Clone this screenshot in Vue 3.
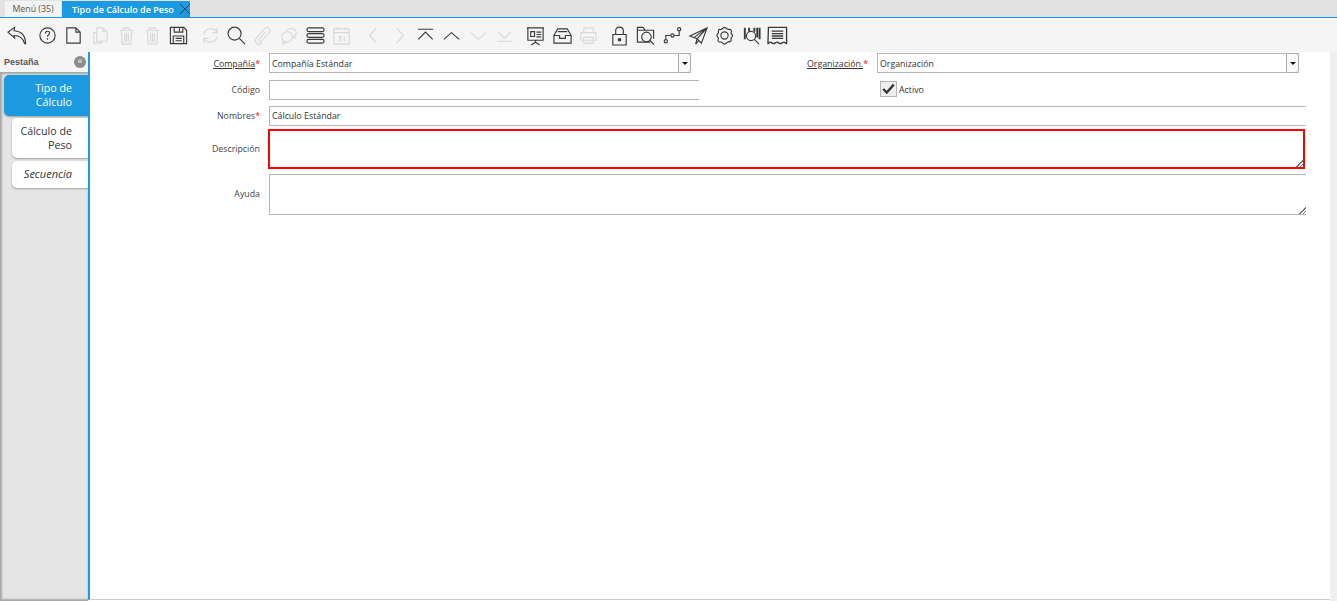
<script setup>
// toolbar groups, disabled icons are drawn in light gray
const toolbar = [
  [{ id: 'undo' }],
  [
    { id: 'help' }, { id: 'new' }, { id: 'copy', off: true }, { id: 'trash', off: true },
    { id: 'trash', off: true }, { id: 'save' }
  ],
  [
    { id: 'refresh', off: true }, { id: 'search' }, { id: 'clip', off: true }, { id: 'chat', off: true },
    { id: 'list' }, { id: 'cal', off: true }
  ],
  [
    { id: 'prev', off: true }, { id: 'next', off: true }, { id: 'first' }, { id: 'up' },
    { id: 'down', off: true }, { id: 'last', off: true }
  ],
  [{ id: 'report' }, { id: 'archive' }, { id: 'print', off: true }],
  [
    { id: 'lock' }, { id: 'zoom' }, { id: 'flow' }, { id: 'send' }, { id: 'gear' },
    { id: 'barcode' }, { id: 'ticket' }
  ]
]

const icons = {
  undo: '<path d="M2 7.5L9 2.5 8.5 6C15 6.5 20.5 10 20.5 19.5L19.5 19.5C18 14 14 11 8.5 11L9 13.5Z" />',
  help: '<circle cx="11" cy="11" r="8" /><path d="M8.8 8.8c0-3 4.4-3 4.4-.4 0 1.8-2.2 1.8-2.2 3.8M11 14v1.4" />',
  new: '<path d="M4 3h9.5l4.5 4.5V19H4zM13.5 3v4.5H18" />',
  copy: '<path d="M7 8H4v11h8v-2M7 3h6.5L18 7v10H7zM13.5 3v4H18" />',
  trash: '<path d="M4 5.5h14M8 5.5V3h6v2.5M5.5 5.5L6.5 20h9l1-14.5M9 8v10M11 8v10M13 8v10" />',
  save: '<path d="M2.5 2.5h14l3 3v14h-17zM6.5 2.5v5h9v-5M12 3.5v3M5.5 19.5v-8h11v8M8 14h6.5M8 16.5h6.5" />',
  refresh: '<path d="M4 10c1-6.5 10-8 13.5-3M18 3v5h-5M18 12c-1 6.5-10 8-13.5 3M4 19v-5h5" />',
  search: '<circle cx="9" cy="9" r="6.8" /><path d="M14 14l6 6" />',
  clip: '<path d="M14 7.5L7.5 15c-1.500 1.700 1 3.500 2.500 2L18 8c3-3.500-2-7.500-5-4L4.500 14c-3 4 2.500 8.500 6 5" />',
  chat: '<circle cx="8.5" cy="12.5" r="5.5" /><path d="M8 6c2-3.500 10-3 10 2 0 2-1 3-2.500 3.500l1.500 2-3-1M5 17l-1 3 4-2" />',
  list: '<rect x="2" y="3" width="18" height="4" rx="2" /><rect x="2" y="9" width="18" height="4" rx="2" /><rect x="2" y="15" width="18" height="4" rx="2" />',
  cal: '<path d="M3 4h16v16H3zM3 8h16M7 2v3M15 2v3M8 12h2.500l-1.500 2c2 0 2 3-.5 3M14 12v5" />',
  prev: '<path d="M14 3l-7 8 7 8" />',
  next: '<path d="M8 3l7 8-7 8" />',
  first: '<path d="M3 4.500h16M3.500 15l7.500-7.500 7.500 7.500" />',
  up: '<path d="M3 15l8-7 8 7" />',
  down: '<path d="M3 8l8 7 8-7" />',
  last: '<path d="M4 7l7 7 7-7M3 17h16" />',
  report: '<path d="M2 3h18M3 3v13h16V3M11 16v2M6.500 21l4.500-3 4.500 3M6 7h4v5H6zM12 7.500h5M12 10h5M12 12.500h5" />',
  archive: '<path d="M6 4h10l4 7v8H2v-8zM2 11h6v3h6v-3h6M6 7h10" />',
  print: '<path d="M6 8V3h10v5M3 8h16v8H3zM6 13h10v6H6zM8 16h6" />',
  lock: '<path d="M4 10h14v11H4zM7 10V6c0-5 8-5 8 0v4" /><circle cx="11" cy="15.500" r="1.300" fill="currentColor" />',
  zoom: '<path d="M16 18H2.500V2.500h6l2 3h9v9M2.500 5.500h8" /><circle cx="12" cy="12.500" r="5" /><path d="M15.500 16l4.500 4.500" />',
  flow: '<circle cx="4" cy="17" r="1.700" /><circle cx="11" cy="11" r="1.700" /><circle cx="18" cy="4.500" r="1.700" /><path d="M4 15v-4h5M13 11h5V6.500" />',
  send: '<path d="M2 11.500L20 3 14 19 9.500 14.500zM20 3L9.500 14.500 8 20l3-3.500M20 3L6.500 13" />',
  gear: '<circle cx="11" cy="11" r="3.800" /><path d="M11 2.500c2 0 2 1.500 3.500 2s2.500-.5 3.500 1-.5 2.500 0 3.500 1.500 1 1.500 2-1 1.500-1.500 2.500.5 2.500-.5 3.500-2.500.5-3.500 1-1 2-3 2-2-1.500-3-2-2.500.5-3.500-1 .5-2.500 0-3.500-1.500-1.500-1.500-2.500 1-1.500 1.500-2.500-.5-2.500.5-3.500 2.500.5 3.500-1 1.500-1.500 3-1.500z" />',
  barcode: '<path d="M4 3v12M8.500 3v4M14 3v4M17 3v10M19.500 3v12" stroke-width="2" /><circle cx="10.500" cy="11.500" r="4.800" /><path d="M14 15l5 5" />',
  ticket: '<path d="M1.500 2.500h19v17c-1 0-1.500-1.500-3-1.500s-2 1.500-3.500 1.500-2-1.500-3.500-1.500-2 1.500-3.500 1.500-2-1.500-3.500-1.500-1 1.500-2.500 1.500zM5 6.500h12M5 9h12M5 11.500h12M5 14h12" stroke-width="1.400" />'
}
</script>

<template>
  <div class="page">
    <div class="tabs">
      <div class="tab">Menú (35)</div>
      <div class="tab active">
        Tipo de Cálculo de Peso
        <svg class="close" viewBox="0 0 12 12"><path d="M1 1l10 10M11 1L1 11" /></svg>
      </div>
    </div>

    <div class="toolbar">
      <div v-for="(group, g) in toolbar" :key="g" class="tool-group">
        <div v-for="(tool, i) in group" :key="i" class="tool" :class="{ off: tool.off }">
          <svg viewBox="0 0 22 22" v-html="icons[tool.id]"></svg>
        </div>
      </div>
    </div>

    <div class="body">
      <aside class="side">
        <div class="side-head">
          <span>Pestaña</span>
          <span class="collapse">«</span>
        </div>
        <div class="side-list">
          <div class="side-tab current">Tipo de Cálculo</div>
          <div class="side-tab">Cálculo de Peso</div>
          <div class="side-tab italic">Secuencia</div>
        </div>
      </aside>

      <main class="form">
        <div class="row first">
          <label class="lbl"><u>Compañía</u><i>*</i></label>
          <div class="combo">
            <span>Compañía Estándar</span>
            <b class="arrow"></b>
          </div>
          <label class="lbl org"><u>Organización.</u><i>*</i></label>
          <div class="combo">
            <span>Organización</span>
            <b class="arrow"></b>
          </div>
        </div>
        <div class="row second">
          <label class="lbl">Código</label>
          <div class="input small-input"></div>
          <div class="check">
            <span class="box">
              <svg viewBox="0 0 16 16"><path d="M2 8l4 4 8-9" /></svg>
            </span>
            Activo
          </div>
        </div>
        <div class="row third">
          <label class="lbl">Nombres<i>*</i></label>
          <div class="input wide">Cálculo Estándar</div>
        </div>
        <div class="row desc">
          <label class="lbl">Descripción</label>
          <div class="area error"><span class="grip"></span></div>
        </div>
        <div class="row help">
          <label class="lbl">Ayuda</label>
          <div class="area wide plain"><span class="grip"></span></div>
        </div>
      </main>
      <div class="scroll"></div>
    </div>
  </div>
</template>

<style scoped>
.page { width: 1337px; height: 601px; display: flex; flex-direction: column; overflow: hidden; font-family: "Open Sans", "Noto Sans", sans-serif; font-size: 8.8px; color: #333; background: #fff; }

.tabs { height: 17px; display: flex; padding-left: 5px; gap: 1px; background: #e2e2e2; border-bottom: 1px solid #1c9ae0; box-sizing: content-box; }
.tab { width: 56px; margin-top: 1px; display: flex; align-items: center; justify-content: center; background: #f2f2f2; color: #555; }
.tab.active { width: 128px; font-size: 9px; background: #1c9ae0; color: #fff; font-weight: 600; justify-content: flex-start; padding-left: 10px; box-sizing: border-box; gap: 5px; white-space: nowrap; }
.close { width: 12px; height: 12px; flex: none; fill: none; stroke: #1c3f63; stroke-width: 1; }

.toolbar { height: 34px; display: flex; align-items: center; padding-left: 3px; gap: 5px; background: #f5f5f5; }
.tool-group { display: flex; }
.tool { width: 26.3px; height: 26px; display: flex; align-items: center; justify-content: center; color: #3a3a3a; }
.tool svg { width: 21px; height: 21px; fill: none; stroke: currentColor; stroke-width: 1.2; }
.tool.off { color: #d8d8d8; }

.body { flex: 1; display: flex; min-height: 0; }

.side { width: 88px; flex: none; display: flex; flex-direction: column; }
.side-head { height: 20px; flex: none; display: flex; align-items: center; justify-content: space-between; padding: 0 2px 0 4px; background: #f5f5f5; font-family: "Liberation Sans", Arial, sans-serif; font-size: 9px; font-weight: 700; color: #555; }
.collapse { width: 12px; height: 12px; border-radius: 50%; background: #8c8c8c; color: #ddd; font-size: 9px; line-height: 10px; text-align: center; }
.side-list { flex: 1; background: #e5e5e5; padding-top: 3px; box-shadow: inset 2px 2px 2px #a8a8a8, inset 0 -2px 2px #a8a8a8; }
.side-tab { margin: 2px 0 0 12px; padding: 6px 16px 6px 4px; background: #fff; border-radius: 5px 0 0 5px; box-shadow: 0 1px 2px rgba(0, 0, 0, 0.3); font-size: 10.7px; line-height: 14px; text-align: right; color: #333; }
.side-tab.current { margin: 0 0 0 4px; background: #1c9ae0; color: #fff; padding: 6px 16px 7px 16px; }
.side-tab.italic { margin-top: 3px; font-size: 11px; font-style: italic; padding-bottom: 7px; }

.form { flex: 1; border-left: 2px solid #1c9ae0; border-bottom: 1px solid #ccc; margin-bottom: 1px; padding-top: 1px; }
.row { display: flex; align-items: center; }
.first { height: 20px; }
.second { height: 20px; margin-top: 7px; }
.third { height: 20px; margin-top: 6px; }
.desc { height: 40px; margin-top: 3px; }
.help { height: 41px; margin-top: 5px; }
.first .lbl, .first .combo span { padding-top: 1px; }
.help .lbl { padding-bottom: 2px; }
.third .lbl { padding-bottom: 1px; }

.lbl { width: 170px; margin-right: 9px; text-align: right; flex: none; color: #444; }
.lbl i { color: #e00; font-style: normal; }
.lbl u { color: #333; }
.lbl.org { width: 177px; }

.combo { width: 422px; height: 20px; flex: none; display: flex; align-items: center; justify-content: space-between; border: 1px solid #b5b5b5; border-right: none; box-sizing: border-box; padding-left: 2px; color: #333; }
.arrow { width: 13px; height: 20px; flex: none; position: relative; border: 1px solid #aaa; border-radius: 0 3px 3px 0; box-sizing: border-box; background: #fafafa; }
.arrow::after { content: ""; position: absolute; left: 3px; top: 8px; border: 3px solid transparent; border-top: 3px solid #111; }

.input { height: 20px; box-sizing: border-box; border-top: 1px solid #b5b5b5; border-bottom: 1px solid #b5b5b5; border-left: 1px solid #b5b5b5; padding-left: 2px; line-height: 18px; }
.small-input { width: 430px; }
.wide { width: 1037px; }
.check { display: flex; align-items: center; gap: 2px; margin-left: 181px; }
.box { width: 17px; height: 16px; margin-bottom: 2px; box-sizing: border-box; border: 1px solid #b5b5b5; background: #eee; display: flex; }
.box svg { width: 15px; height: 14px; fill: none; stroke: #333; stroke-width: 2.6; }

.area { height: 100%; box-sizing: border-box; position: relative; }
.plain { border-top: 1px solid #b5b5b5; border-bottom: 1px solid #b5b5b5; border-left: 1px solid #b5b5b5; }
.error { border: 2px solid #f00; width: 1037px; margin-left: -1px; }
.grip { position: absolute; right: 0; bottom: 0; width: 7px; height: 7px; background: linear-gradient(135deg, transparent 50%, #777 50%, #777 60%, transparent 60%, transparent 75%, #777 75%, #777 85%, transparent 85%); }

.scroll { width: 7px; flex: none; background: #efefef; }
</style>

<style>
body { margin: 0; }
</style>
